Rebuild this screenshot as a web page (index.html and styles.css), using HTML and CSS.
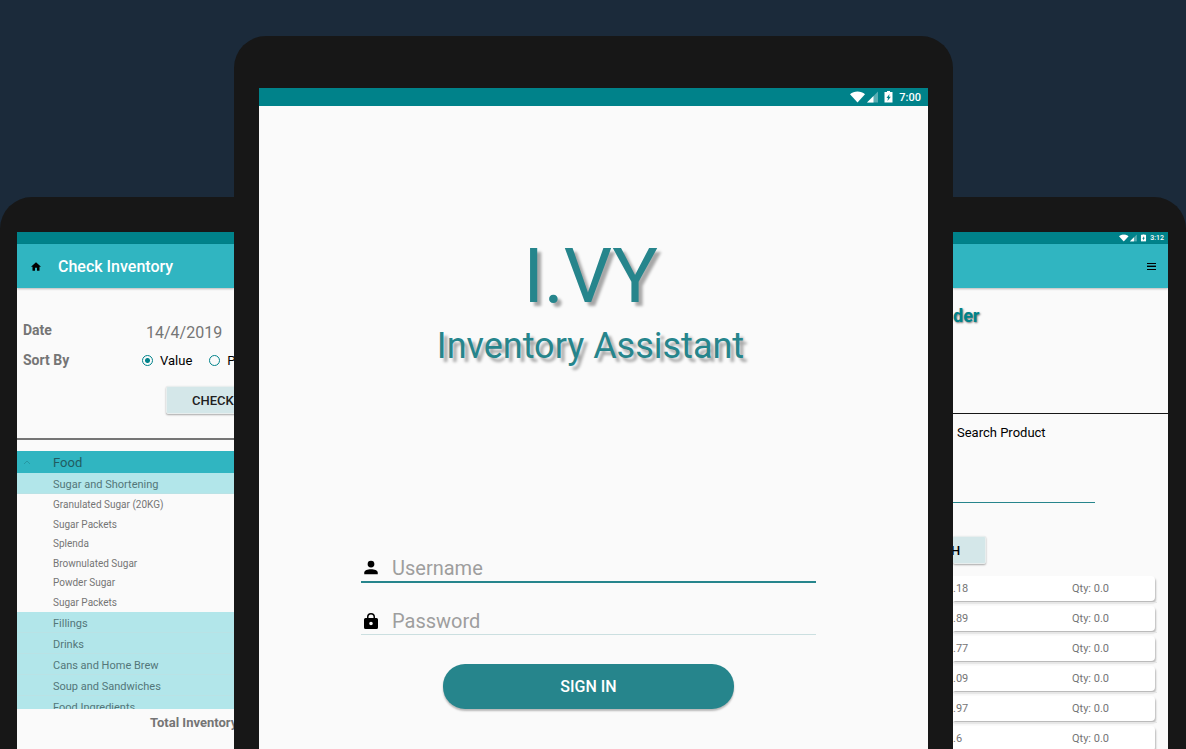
FILE: index.html
```html
<!DOCTYPE html>
<html lang="en">
<head>
<meta charset="utf-8">
<meta name="viewport" content="width=device-width, initial-scale=1">
<title>I.VY Inventory Assistant</title>
<link rel="stylesheet" href="styles.css">
</head>
<body>
<svg class="sprite" aria-hidden="true">
  <symbol id="status" viewBox="0 0 44 12">
    <path fill="#fff" d="M0 3.200C4-.3 11-.3 15 3.200L7.500 11.500Z"/>
    <path fill="#fff" fill-opacity=".35" d="M17 11.500 28 .5v11Z"/>
    <path fill="#fff" d="M17 11.500 23.500 5v6.500Z"/>
    <path fill="#fff" fill-rule="evenodd" d="M37 1V0h3v1h2.500v10.500h-8V1ZM39.500 3 36.500 7h1.500L37.500 10 40.800 5.800H39Z"/>
  </symbol>
</svg>
<main class="stage">
  <section class="tablet tablet-left">
    <div class="screen">
      <div class="status-bar"></div>
      <header class="app-bar">
        <svg class="icon-home" viewBox="0 0 20 17" aria-hidden="true"><path d="M8 17v-6h4v6h5V9h3L10 0 0 9h3v8Z"/></svg>
        <h2>Check Inventory</h2>
      </header>
      <form class="filters">
        <span class="field-name">Date</span>
        <span class="date">14/4/2019</span>
        <span class="field-name">Sort By</span>
        <div class="options">
          <label><input type="radio" name="sort" checked>Value</label>
          <label><input type="radio" name="sort">P</label>
        </div>
        <button class="flat-button check" type="button">CHECK</button>
      </form>
      <div class="list">
        <h3><svg viewBox="0 0 8 5" aria-hidden="true"><path d="M1 4 4 1 7 4"/></svg>Food</h3>
        <h4>Sugar and Shortening</h4>
        <ul>
          <li>Granulated Sugar (20KG)</li>
          <li>Sugar Packets</li>
          <li>Splenda</li>
          <li>Brownulated Sugar</li>
          <li>Powder Sugar</li>
          <li>Sugar Packets</li>
        </ul>
        <h4>Fillings</h4>
        <h4>Drinks</h4>
        <h4>Cans and Home Brew</h4>
        <h4>Soup and Sandwiches</h4>
        <h4>Food Ingredients</h4>
      </div>
      <p class="total">Total Inventory</p>
    </div>
  </section>

  <section class="tablet tablet-main">
    <div class="screen">
      <div class="status-bar"><svg viewBox="0 0 44 12" aria-hidden="true"><use href="#status"/></svg><span>7:00</span></div>
      <div class="brand">
        <h1>I.VY</h1>
        <p>Inventory Assistant</p>
      </div>
      <form class="login">
        <label class="field active">
          <svg viewBox="0 0 16 16" aria-hidden="true"><circle cx="8" cy="4.500" r="3"/><path d="M2 13.500V12C2 10 5 9 8 9s6 1 6 3v1.500Z"/></svg>
          <input type="text" placeholder="Username" aria-label="Username">
        </label>
        <label class="field">
          <svg viewBox="0 0 16 18" aria-hidden="true"><path fill-rule="evenodd" d="M4 6V5a4 4 0 0 1 8 0v1h1.500Q15 6 15 7.500v8q0 1.500-1.500 1.500h-11Q1 17 1 15.500v-8Q1 6 2.500 6Zm1.500 0h5V5a2.500 2.500 0 0 0-5 0ZM8 9.700a1.800 1.800 0 1 0 0 3.600 1.800 1.800 0 0 0 0-3.600Z"/></svg>
          <input type="password" placeholder="Password" aria-label="Password">
        </label>
        <button class="sign-in" type="button">SIGN IN</button>
      </form>
    </div>
  </section>

  <section class="tablet tablet-right">
    <div class="screen">
      <div class="status-bar"><svg viewBox="0 0 44 12" aria-hidden="true"><use href="#status"/></svg><span>3:12</span></div>
      <header class="app-bar">
        <button class="menu" type="button" aria-label="Menu"><svg viewBox="0 0 9 7" aria-hidden="true"><path d="M0 0h9v1H0ZM0 3h9v1H0ZM0 6h9v1H0Z"/><path fill-opacity=".4" d="M0 2h9v1H0Z"/></svg></button>
      </header>
      <h2 class="order-title">der</h2>
      <form class="search">
        <label for="product">Search Product</label>
        <input id="product" type="text">
        <button class="flat-button" type="button">H</button>
      </form>
      <ul class="products">
        <li><div class="card"><span>.18</span><span>Qty: 0.0</span></div></li>
        <li><div class="card"><span>.89</span><span>Qty: 0.0</span></div></li>
        <li><div class="card"><span>.77</span><span>Qty: 0.0</span></div></li>
        <li><div class="card"><span>.09</span><span>Qty: 0.0</span></div></li>
        <li><div class="card"><span>.97</span><span>Qty: 0.0</span></div></li>
        <li><div class="card"><span>.6</span><span>Qty: 0.0</span></div></li>
      </ul>
    </div>
  </section>
</main>
</body>
</html>
```
FILE: styles.css
```css
* { box-sizing: border-box; }
body, h1, h2, h3, h4, p, ul { margin: 0; padding: 0; }
ul { list-style: none; }
body { background: #1b2a3a; color: #757575; font-family: Roboto, sans-serif; }
button, input { font: inherit; margin: 0; }
.sprite { display: none; }

.stage {
  display: grid;
  grid-template-columns: minmax(0, 234fr) minmax(0, 719fr) minmax(0, 233fr);
  height: 100vh;
  overflow: hidden;
}
.tablet { display: flex; background: #171717; overflow: hidden; }
.screen { flex: 1; min-width: 0; background: #fafafa; overflow: hidden; }
.tablet-left { margin-top: 197px; padding: 35px 0 0 17px; border-top-left-radius: 32px; }
.tablet-right { margin-top: 197px; padding: 35px 18px 0 0; border-top-right-radius: 32px; }
.tablet-main { margin-top: 36px; padding: 52px 25px 0; border-radius: 32px 32px 0 0; }

.status-bar {
  display: flex;
  align-items: center;
  justify-content: flex-end;
  gap: 3px;
  height: 12px;
  padding-right: 4px;
  background: #00828a;
  color: #fff;
  font-size: 7px;
  font-weight: 500;
}
.status-bar svg { width: 28px; height: 8px; }
.tablet-main .status-bar { gap: 5px; height: 18px; padding-right: 7px; font-size: 11px; }
.tablet-main .status-bar svg { width: 44px; height: 12px; }

.app-bar {
  display: flex;
  align-items: center;
  gap: 17px;
  height: 44px;
  padding: 0 12px 0 14px;
  background: #30b5c1;
  box-shadow: 0 1px 2px #0004;
  color: #fff;
}
.app-bar h2 { font-size: 16px; font-weight: 500; white-space: nowrap; }
.icon-home { width: 10px; height: 9px; }

.filters {
  display: grid;
  grid-template-columns: 112px 1fr;
  grid-template-rows: 30px 30px;
  align-items: center;
  height: 152px;
  padding: 27px 0 0 6px;
  border-bottom: 2px solid #757575;
  white-space: nowrap;
  align-content: start;
}
.field-name { font-size: 14px; font-weight: 700; }
.date { padding: 4px 0 0 11px; font-size: 16px; }
.options { display: flex; gap: 17px; padding-left: 7px; color: #000; font-size: 13px; }
.options label { display: flex; align-items: center; gap: 7px; }
.options input {
  appearance: none;
  flex: none;
  width: 11px;
  height: 11px;
  border: 1px solid #00828a;
  border-radius: 50%;
}
.options input:checked { background: radial-gradient(circle, #00828a 2px, #fafafa00 3px); }
.flat-button {
  border: 1px solid #e8eeee;
  border-radius: 2px;
  background: #d4e7e9;
  box-shadow: 0 1px 2px #0005;
  color: #212121;
  font-size: 13px;
  font-weight: 500;
  height: 28px;
}
.check { grid-column: 2; width: 110px; margin: 11px 0 0 31px; padding: 0 0 0 25px; text-align: left; }

.list { height: 258px; margin-top: 11px; overflow: hidden; white-space: nowrap; }
.list h3 {
  display: flex;
  align-items: center;
  gap: 22px;
  height: 22px;
  padding-left: 6px;
  background: #30b5c1;
  color: #215c62;
  font-size: 13px;
  font-weight: 400;
}
.list h3 svg { width: 8px; height: 5px; fill: none; stroke: #2698a3; }
.list h4 {
  height: 21px;
  padding-left: 36px;
  border-bottom: 1px solid #b9e2e5;
  background: #b2e6ea;
  color: #537679;
  font-size: 11px;
  font-weight: 400;
  line-height: 24px;
}
.list ul { display: grid; grid-auto-rows: 1fr; align-items: center; height: 118px; padding-top: 1px; }
.list li { padding-left: 36px; font-size: 10px; }
.total { padding: 6px 0 0 133px; font-size: 13px; font-weight: 700; white-space: nowrap; }

.brand {
  padding-top: 126px;
  padding-right: 6px;
  color: #26858c;
  text-align: center;
  text-shadow: 4px 4px 3px #0005;
}
.brand h1 { font-size: 76px; font-weight: 400; line-height: 88px; }
.brand p { font-size: 36px; line-height: 40px; padding-top: 6px; }
.login { width: 68%; margin: 185px 0 0 102px; }
.field {
  display: flex;
  align-items: center;
  gap: 12px;
  height: 52px;
  padding: 24px 0 0 1px;
  border-bottom: 1px solid #cbdfe0;
}
.field.active { height: 32px; padding-top: 3px; border-bottom: 2px solid #26858c; }
.field svg { flex: none; width: 18px; height: 18px; }
.field input {
  flex: 1;
  min-width: 0;
  padding: 0;
  border: 0;
  outline: 0;
  background: none;
  font-size: 20px;
  line-height: 24px;
}
.field input::placeholder { color: #9e9e9e; opacity: 1; }
.sign-in {
  display: block;
  width: 64%;
  height: 45px;
  margin: 29px auto 0;
  border: 0;
  border-radius: 22px;
  background: #26858c;
  box-shadow: 0 2px 2px #0004;
  color: #fff;
  font-size: 16px;
  font-weight: 500;
}

.tablet-right .app-bar { justify-content: flex-end; }
.menu { display: flex; padding: 0; border: 0; background: none; }
.menu svg { width: 9px; height: 7px; }
.order-title {
  height: 126px;
  padding-top: 17px;
  border-bottom: 1px solid #171717;
  color: #00828a;
  font-size: 18px;
  line-height: 22px;
  text-shadow: 1px 1px 2px #0008;
}
.search { display: flex; flex-direction: column; align-items: flex-start; padding-top: 10px; }
.search label { padding-left: 4px; color: #000; font-size: 13px; line-height: 18px; }
.search input {
  width: 66%;
  height: 61px;
  padding: 36px 0 0;
  border: 0;
  border-bottom: 1px solid #26858c;
  outline: 0;
  background: none;
}
.search .flat-button { width: 33px; margin: 33px 0 12px; padding: 0; border-left: 0; text-align: left; text-indent: -2px; color: #000; }
.products { padding-right: 11px; font-size: 11px; }
.products li { height: 30px; padding: 0 2px 3px 0; }
.products .card {
  display: grid;
  grid-template-columns: 119px 1fr;
  align-items: center;
  height: 25px;
  border-radius: 0 4px 4px 0;
  background: #fff;
  box-shadow: 1px 2px 2px #0004;
}
.products li::after { content: ""; display: block; height: 1px; margin: 1px -2px 0 0; background: #e6e6e6; }
```
